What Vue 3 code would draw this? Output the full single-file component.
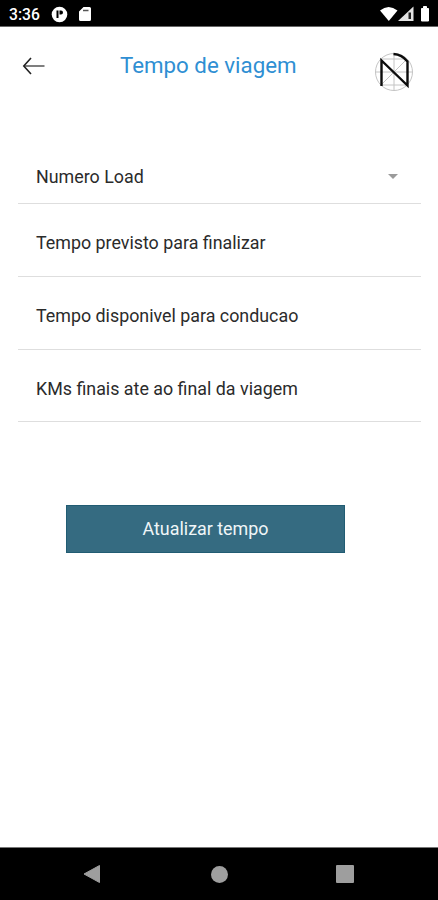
<template>
  <div class="screen">
    <div class="status-bar">
      <span class="clock">3:36</span>
      <svg class="status-app" width="17" height="17" viewBox="0 0 17 17">
        <circle cx="8.5" cy="8.5" r="7.800" fill="#fff" />
        <path d="M5.500 4.500h2v7.500h-2zM8.500 4.500h1.500a2 2 0 0 1 0 4H8.500z" fill="#000" />
      </svg>
      <svg class="status-card" width="12" height="14" viewBox="0 0 12 14">
        <path d="M4.500 0h6A1.500 1.500 0 0 1 12 1.500v11a1.500 1.500 0 0 1-1.500 1.500h-9A1.500 1.500 0 0 1 0 12.500V4.500z" fill="#fff" />
        <path d="M4 3.500h5.500" stroke="#555" stroke-width="1.500" />
      </svg>
      <svg class="status-signal" width="53" height="18" viewBox="0 0 53 18">
        <path d="M2 5.500Q10.500-1.500 19.500 5.500L10.800 16z" fill="#fff" />
        <path d="M35.500 1.500v14.500H20z" fill="#e4e4e4" />
        <path d="M30.500 7.500h2.500v6.500h-2.500z" fill="#222" />
        <path d="M43.500 3.500h2V1.500h3v2h2v12.500h-7z" fill="#fff" stroke="#fff" stroke-linejoin="round" />
      </svg>
    </div>

    <div class="header">
      <svg class="back" width="24" height="20" viewBox="0 0 24 20">
        <path d="M22.500 10H2" fill="none" stroke="#555" stroke-width="1.500" />
        <path d="M9 2L1.800 10l7.200 8" fill="none" stroke="#222" stroke-width="1.600" />
      </svg>
      <h1>Tempo de viagem</h1>
      <svg class="logo" width="40" height="40" viewBox="0 0 40 40">
        <g fill="none" stroke="#c4c4c4" stroke-width="1">
          <circle cx="20" cy="20" r="18.500" />
          <path d="M20 1.500v37M1.500 20h37M7 33L33 7M7 7h26M7 33h26" />
        </g>
        <path d="M7.500 34V8.500L33.500 33.500V9.500Q28 2.500 19.500 2" fill="none" stroke="#0c0c0c" stroke-width="2.400" />
      </svg>
    </div>

    <div class="form">
      <div v-for="field in fields" :key="field.label" class="field">
        <span>{{ field.label }}</span>
        <i v-if="field.select" class="caret"></i>
      </div>
    </div>

    <button class="update">Atualizar tempo</button>

    <div class="nav-bar">
      <svg width="18" height="20" viewBox="0 0 18 20">
        <path d="M16.500 1.500v17L1 10z" fill="#9e9e9e" stroke="#9e9e9e" stroke-linejoin="round" />
      </svg>
      <span class="home"></span>
      <span class="recent"></span>
    </div>
  </div>
</template>

<script setup>
const fields = [
  { label: "Numero Load", select: true },
  { label: "Tempo previsto para finalizar" },
  { label: "Tempo disponivel para conducao" },
  { label: "KMs finais ate ao final da viagem" },
];
</script>

<style>
body {
  margin: 0;
}
</style>

<style scoped>
.screen {
  display: flex;
  flex-direction: column;
  width: 438px;
  height: 900px;
  background-color: #fff;
  font-family: Roboto, "Liberation Sans", sans-serif;
  overflow: hidden;
}

.status-bar {
  display: flex;
  align-items: center;
  box-sizing: border-box;
  height: 27px;
  padding: 2px 7px 0 9px;
  background-color: #000;
  border-bottom: 1px solid #666;
}

.clock {
  width: 42px;
  color: #fff;
  font-size: 15.700px;
  font-weight: 500;
}

.status-card {
  margin-left: 11px;
}

.status-signal {
  margin-left: auto;
}

.header {
  display: flex;
  align-items: flex-start;
  box-sizing: border-box;
  height: 129px;
  padding: 25px 24px 0 22px;
}

.back {
  margin-top: 4px;
}

h1 {
  flex: 1;
  margin: 0 0 0 74px;
  color: #2f8fd3;
  font-size: 22.300px;
  font-weight: 400;
  line-height: 27px;
  white-space: nowrap;
}

.form {
  margin: 0 17px 0 18px;
}

.field {
  display: flex;
  align-items: center;
  justify-content: space-between;
  box-sizing: border-box;
  height: 73px;
  padding: 4px 23px 0 18px;
  border-bottom: 1px solid #dedede;
  color: #2b2b2b;
  font-size: 17.850px;
}

.field:first-child {
  height: 48px;
  padding: 0 23px 6px 18px;
}

.field:last-child {
  height: 72px;
  padding-top: 6px;
}

.caret {
  border: 5px solid transparent;
  border-top-color: #9b9b9b;
  border-bottom: 0;
}

.update {
  width: 279px;
  height: 48px;
  margin: 83px 0 0 66px;
  padding: 0 0 2px;
  border: 1px solid #215c73;
  background-color: #356b81;
  color: #f0f6f8;
  font-family: inherit;
  font-size: 17.900px;
}

.nav-bar {
  display: flex;
  align-items: center;
  box-sizing: border-box;
  height: 53px;
  margin-top: auto;
  padding: 0 84px 0 83px;
  justify-content: space-between;
  background-color: #000;
  border-top: 1px solid #777;
}

.home {
  width: 17px;
  height: 17px;
  margin-left: 1px;
  border-radius: 50%;
  background-color: #9e9e9e;
}

.recent {
  width: 18px;
  height: 18px;
  border-radius: 1px;
  background-color: #9e9e9e;
}
</style>
